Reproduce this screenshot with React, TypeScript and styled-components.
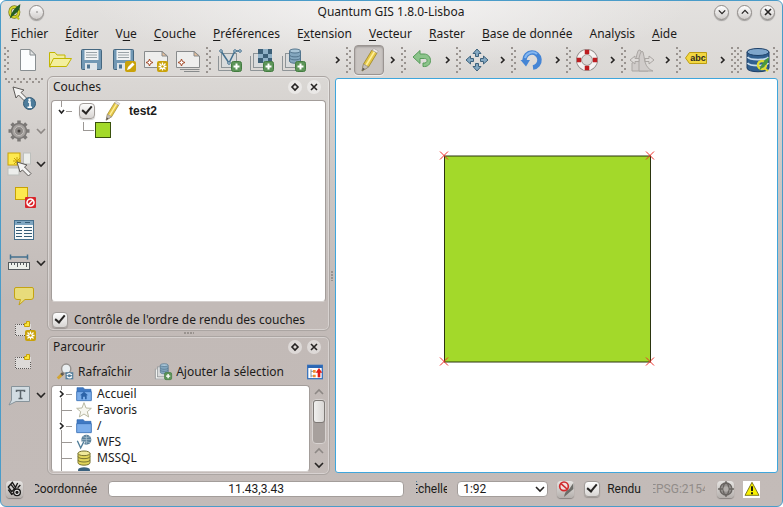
import React from "react";
import styled, { createGlobalStyle, css } from "styled-components";

const GlobalStyle = createGlobalStyle`
  *, *::before, *::after { box-sizing: border-box; }
  body { margin: 0; background: #fff; }
  button, input, select { font: inherit; color: inherit; }
`;

const UI_FONT = `"Noto Sans", "Open Sans", sans-serif`;
const STATUS_FONT = `Roboto, "Liberation Sans", sans-serif`;

/* ---------- window frame ---------- */

const Window = styled.div`
  display: flex;
  flex-direction: column;
  min-height: 100vh;
  padding: 1px 4px 1px 1px;
  border: 1px solid #4a9cc9;
  border-radius: 6px;
  font: 12px/16px ${UI_FONT};
  color: #1c1b1a;
  background: radial-gradient(ellipse 300px 70px at 50% 0, #f4f3f3, transparent) no-repeat,
    linear-gradient(#e3e1df 0, #dad7d4 80px, #ccc7c4 180px, #c2bab7 300px, #c3bbb8);
`;

const TitleBar = styled.header`
  display: grid;
  grid-template-columns: 80px 1fr 80px;
  align-items: center;
  height: 20px;
  padding: 0 3px 0 5px;
`;

const Title = styled.h1`
  margin: 0;
  font: inherit;
  text-align: center;
`;

const TitleSide = styled.div<{ $end?: boolean }>`
  display: flex;
  align-items: center;
  gap: ${(p) => (p.$end ? "8px" : "6px")};
  justify-content: ${(p) => (p.$end ? "flex-end" : "flex-start")};
`;

const RoundButton = styled.button`
  display: grid;
  place-items: center;
  width: 15px;
  height: 15px;
  padding: 0;
  border: 1px solid #8f8b88;
  border-radius: 50%;
  background: linear-gradient(#fff, #cfccca);
  box-shadow: 0 1px 1px rgba(0, 0, 0, 0.3);
`;

const MenuBar = styled.nav`
  display: flex;
  align-items: center;
  height: 22px;
  padding: 2px 0 0 9px;
  gap: 17px;
`;

const MenuButton = styled.button`
  padding: 0;
  border: 0;
  background: none;
  white-space: nowrap;
  u { text-underline-offset: 2px; }
`;

/* ---------- toolbars ---------- */

const ToolBar = styled.div`
  display: flex;
  height: 32px;
  margin: 0 -4px 2px 0;
`;

const ToolGroup = styled.div<{ $wide?: boolean }>`
  display: flex;
  align-items: center;
  flex: 0 0 auto;
  min-width: ${(p) => (p.$wide ? "140px" : "50px")};
`;

const SmallGroup = styled(ToolGroup)`
  width: 55px;
`;

const dots = css`
  background-image: radial-gradient(circle at 1px 1px, #99938f 0.8px, transparent 1.2px),
    radial-gradient(circle at 1px 1px, #99938f 0.8px, transparent 1.2px);
`;

const Handle = styled.div<{ $across?: boolean; $double?: boolean }>`
  ${dots}
  flex: 0 0 auto;
  background-size: 6px 6px;
  background-position: 0 0, 3px 3px;
  ${(p) =>
    p.$across
      ? css`
          width: 38px;
          height: 6px;
          margin: 0 0 -3px 3px;
        `
      : css`
          width: ${p.$double ? "12px" : "6px"};
          height: 26px;
          margin: 0 2px;
        `}
`;

const ToolButton = styled.button<{ $pressed?: boolean; $size?: number }>`
  display: grid;
  place-items: center;
  flex: 0 0 auto;
  width: ${(p) => p.$size ?? 30}px;
  height: 30px;
  padding: 0;
  border: 1px solid ${(p) => (p.$pressed ? "#9a9491" : "transparent")};
  border-radius: 4px;
  background: ${(p) => (p.$pressed ? "#c9c4c1" : "none")};
  box-shadow: ${(p) => (p.$pressed ? "inset 0 1px 2px rgba(0,0,0,.25), 0 1px 0 #f0eeed" : "none")};
`;

const MoreButton = styled.button`
  display: grid;
  place-items: center;
  width: 12px;
  height: 24px;
  margin-left: auto;
  padding: 0;
  border: 0;
  background: none;
`;

const SideBar = styled.div`
  flex: 0 0 45px;
`;

const SideRow = styled.div<{ $menu?: boolean }>`
  display: flex;
  align-items: center;
  height: 33px;
  padding-left: ${(p) => (p.$menu ? "2px" : "7px")};
`;

/* ---------- docks ---------- */

const Body = styled.main`
  display: flex;
  flex: 1;
`;

const DockColumn = styled.div`
  display: flex;
  flex-direction: column;
  flex: 0 0 283px;
  min-width: 0;
  margin: -2px 0 -2px;
`;

const Dock = styled.section<{ $grow?: boolean }>`
  display: flex;
  flex-direction: column;
  flex: ${(p) => (p.$grow ? "1 1 auto" : "0 0 auto")};
  padding: 0 3px 2px;
  border: 1px solid #aba5a2;
  border-radius: 6px;
  box-shadow: inset 0 0 0 1px rgba(255, 255, 255, 0.35);
`;

const DockHead = styled.header`
  display: flex;
  align-items: center;
  gap: 5px;
  height: 21px;
  padding: 0 5px 1px 2px;
  h2 {
    flex: 1;
    margin: 0;
    font: inherit;
  }
`;

const DockButton = styled.button`
  display: grid;
  place-items: center;
  width: 14px;
  height: 14px;
  padding: 0;
  border: 0;
  border-radius: 50%;
  background: rgba(255, 255, 255, 0.45);
`;

const Splitter = styled.div`
  ${dots}
  width: 10px;
  height: 3px;
  margin: 1px auto;
  background-size: 3px 3px;
`;

const VSplitter = styled.div`
  ${dots}
  align-self: center;
  width: 3px;
  height: 10px;
  margin: 0 1px;
  background-size: 3px 3px;
`;

const Sunken = styled.ul<{ $grow?: boolean }>`
  flex: ${(p) => (p.$grow ? "1 1 auto" : "1 1 0")};
  min-width: 0;
  margin: ${(p) => (p.$grow ? "2px 0 0" : "0")};
  padding: 0 0 0 5px;
  list-style: none;
  overflow: hidden;
  border: 1px solid #a39d9a;
  border-bottom-color: #d5d0ce;
  border-radius: 4px;
  background: #fff;
`;

const LayerRow = styled.li<{ $child?: boolean }>`
  display: flex;
  align-items: center;
  height: ${(p) => (p.$child ? "18px" : "20px")};
  padding-left: ${(p) => (p.$child ? "22px" : "0")};
  gap: ${(p) => (p.$child ? "1px" : "7px")};
  font-family: "Liberation Sans", Arial, sans-serif;
  font-weight: 700;
`;

const Swatch = styled.span`
  width: 16px;
  height: 16px;
  border: 1px solid #39500d;
  background: #a3d92a;
`;

const Check = styled.input`
  appearance: none;
  flex: 0 0 auto;
  width: 16px;
  height: 16px;
  margin: 0;
  border: 1px solid #a29d9a;
  border-radius: 4px;
  background: linear-gradient(#fdfdfd, #d8d5d3);
  box-shadow: 0 1px 1px rgba(0, 0, 0, 0.2);
  &:checked::before {
    content: "";
    display: block;
    width: 6px;
    height: 10px;
    margin: 0 auto;
    border: solid #262423;
    border-width: 0 2px 2px 0;
    transform: rotate(40deg);
  }
`;

const CheckLabel = styled.label`
  display: flex;
  align-items: center;
  gap: 6px;
  height: 26px;
  padding: 9px 0 0 1px;
`;

const BrowserTools = styled.div`
  display: flex;
  align-items: center;
  justify-content: space-between;
  height: 27px;
  padding: 0 3px 0 6px;
`;

const TextButton = styled.button`
  display: flex;
  align-items: center;
  gap: 4px;
  padding: 0;
  border: 0;
  background: none;
  white-space: nowrap;
`;

const BrowserArea = styled.div`
  display: flex;
  gap: 2px;
  height: 87px;
`;

const BrowserRow = styled.li`
  display: flex;
  align-items: center;
  height: 16px;
  gap: 4px;
  svg + svg { margin-right: 1px; }
`;

const Scroll = styled.div`
  display: flex;
  flex-direction: column;
  width: 14px;
`;

const ScrollButton = styled.button`
  display: grid;
  place-items: center;
  height: 14px;
  padding: 0;
  border: 0;
  background: none;
`;

const Track = styled.div`
  flex: 1;
  border: 1px solid #d7d2d0;
  border-radius: 4px;
  background: #a7a09d;
`;

const Thumb = styled.div`
  height: 23px;
  border: 1px solid #7e7976;
  border-radius: 3px;
  background: linear-gradient(90deg, #f0efee, #dad7d5);
`;

const MapCanvas = styled.div`
  display: flex;
  flex: 1 1 0;
  min-width: 0;
  border: 1px solid #3fa6dc;
  border-radius: 3px;
  background: #fff;
  svg {
    flex: 1;
    min-width: 0;
  }
`;

/* ---------- status bar ---------- */

const StatusBar = styled.footer`
  display: flex;
  align-items: center;
  height: 32px;
  padding: 0 18px 0 4px;
  font-family: ${STATUS_FONT};
`;

const Clipped = styled.label<{ $width: number; $align: "center" | "flex-end"; $dim?: boolean }>`
  display: flex;
  flex: 0 0 ${(p) => p.$width}px;
  justify-content: ${(p) => p.$align};
  margin-left: 12px;
  overflow: hidden;
  white-space: nowrap;
  color: ${(p) => (p.$dim ? "#918c89" : "inherit")};
`;

const Coordinates = styled.input`
  flex: 1;
  min-width: 80px;
  height: 16px;
  margin-left: 11px;
  padding: 0;
  border: 1px solid #a39d9a;
  border-radius: 4px;
  background: #fff;
  text-align: center;
`;

const SelectBox = styled.div`
  display: grid;
  flex: 0 0 91px;
  margin: 0 9px 0 10px;
  align-items: center;
  > * { grid-area: 1 / 1; }
  svg { justify-self: end; margin-right: 3px; pointer-events: none; }
`;

const ScaleSelect = styled.select`
  appearance: none;
  width: 100%;
  height: 16px;
  padding: 0 5px;
  border: 1px solid #a39d9a;
  border-radius: 4px;
  background: #fff;
  line-height: 14px;
`;

const RenderLabel = styled.label`
  display: flex;
  align-items: center;
  gap: 7px;
  margin-left: 10px;
`;

const StatusButton = styled.button<{ $gap?: number; $plain?: boolean }>`
  display: grid;
  place-items: center;
  flex: 0 0 17px;
  height: 17px;
  margin-left: ${(p) => p.$gap ?? 0}px;
  padding: 0;
  border: 0;
  border-radius: ${(p) => (p.$plain ? "0" : "4px")};
  background: ${(p) => (p.$plain ? "#fff" : "linear-gradient(#e6e4e2, #b5b0ad)")};
  box-shadow: ${(p) => (p.$plain ? "none" : "0 1px 1px rgba(0,0,0,.3)")};
`;

/* ---------- icons ---------- */

const art: Record<string, React.ReactNode> = {
  blank: (
    <g>
      <path d="M4.500 1.500H14L19.500 7V22.500H4.500Z" fill="#fbfdfe" stroke="#888e91" />
      <path d="M14 1.500V7H19.500Z" fill="#e4e5e5" stroke="#888e91" />
    </g>
  ),
  open: (
    <g stroke="#c2b600" strokeLinejoin="round">
      <path d="M1.500 19V4.500H7L9 7H17V10.500H6L3 19Z" fill="#f1eda0" />
      <path d="M5.500 10.500H23.500L18.500 18.500H1.500Z" fill="#f3ef9f" />
    </g>
  ),
  save: (
    <g>
      <rect x="1.500" y="1.500" width="20" height="20" rx="1" fill="#7298b4" stroke="#456780" />
      <rect x="4.500" y="2" width="14" height="10" fill="#f0f2f3" />
      <path d="M6 4.500H17M6 7H17M6 9.500H17" stroke="#9aa3a8" />
      <rect x="5" y="15" width="12" height="7" fill="#dfe5e9" />
      <rect x="7" y="16.500" width="3" height="4" fill="#4d7390" />
    </g>
  ),
  penBadge: (
    <g>
      <rect x="13" y="13" width="11" height="11" rx="2" fill="#c9a20a" />
      <path d="M15 22L16 19L20.500 14.500L22.500 16.500L18 21Z" fill="#fff" />
    </g>
  ),
  starBadge: (
    <g>
      <rect x="13" y="13" width="11" height="11" rx="2" fill="#c9a20a" />
      <path d="M18.500 14.500V22.500M14.500 18.500H22.500M15.500 15.500L21.500 21.500M21.500 15.500L15.500 21.500" stroke="#fff" strokeWidth="1.300" />
      <circle cx="18.500" cy="18.500" r="1.200" fill="#c9a20a" />
    </g>
  ),
  plusBadge: (
    <g>
      <rect x="13.500" y="13.500" width="10" height="10" rx="2" fill="#5d9559" stroke="#437c40" />
      <path d="M18.500 15.500V21.500M15.500 18.500H21.500" stroke="#fff" strokeWidth="2" />
    </g>
  ),
  page: (
    <g>
      <path d="M.5 3.500H18L23.500 8V19.500H.5Z" fill="#eeeeed" stroke="#888b8c" />
      <path d="M18 3.500V8H23Z" fill="#eac19a" stroke="#888b8c" />
      <path d="M5.500 11L6.500 13.500L9 14.500L6.500 15.500L5.500 18L4.500 15.500L2 14.500L4.500 13.500Z" fill="#fff" stroke="#a34a28" />
    </g>
  ),
  pages: <path d="M4 21.500H23.500M8 23.500H23.500" stroke="#888b8c" />,
  sheet: (
    <g>
      <path d="M.5 8V22.500H14" fill="none" stroke="#8e9497" />
      <rect x="3.500" y="5.500" width="15" height="14" fill="#d9dbdc" stroke="#8e9497" />
    </g>
  ),
  vector: (
    <g fill="none" stroke="#44708e">
      <path d="M3 3L11 15L17 3H22" strokeWidth="1.500" />
      <g fill="#dbe7ef">
        <circle cx="3" cy="3" r="1.300" />
        <circle cx="11" cy="15" r="1.300" />
        <circle cx="17" cy="3" r="1.300" />
        <circle cx="22" cy="3" r="1.300" />
      </g>
    </g>
  ),
  raster: (
    <g>
      <rect x="8" y="1" width="14" height="14" fill="#8fb0c6" />
      <path d="M8 1H13V6H8ZM18 1H22V6H18ZM13 6H18V10H13ZM8 10H13V15H8ZM18 10H22V15H18Z" fill="#3d6078" />
    </g>
  ),
  barrel: (
    <g stroke="#53758d">
      <path d="M7.500 3V13C7.500 16 18.500 16 18.500 13V3" fill="#83a6be" />
      <ellipse cx="13" cy="3" rx="5.500" ry="2" fill="#a9c5d7" />
      <path d="M7.500 7C8 9.500 18 9.500 18.500 7M7.500 10C8 12.500 18 12.500 18.500 10" fill="none" />
    </g>
  ),
  pencil: (
    <g strokeLinejoin="round">
      <path d="M5 23L6.500 16L15 2L20 5L11.500 19Z" fill="#e4c647" stroke="#9b8425" strokeWidth=".8" />
      <path d="M9 17.500L17.500 3.500" stroke="#fff09b" strokeWidth="1.600" />
      <path d="M15 2L17 .6L21.300 3L20 5Z" fill="#eeeae8" stroke="#a19b98" strokeWidth=".6" />
      <path d="M5 23L6.500 16L11.500 19Z" fill="#c5bfbb" stroke="#88827e" strokeWidth=".6" />
      <path d="M5 23L5.800 19.800L8 21Z" fill="#56524f" />
    </g>
  ),
  undo: (
    <path d="M1 9L8 2.500V6H12C16 6 18.500 9 18.500 12.500C18.500 16.500 15.500 19 11 18.500V15C14 15.500 15 14 15 12.500C15 11 14 10.500 12.500 10.500H8V15.500Z" fill="#8cc48b" stroke="#579b5a" strokeLinejoin="round" />
  ),
  move: (
    <g fill="#84a8c2" stroke="#3e627c" strokeLinejoin="round">
      <path d="M10 1L14 5.500H11.500V8.500H8.500V5.500H6Z" />
      <path d="M10 23L6 18.500H8.500V15.500H11.500V18.500H14Z" />
      <path d="M-1 12L3.500 8V10.500H6.500V13.500H3.500V16Z" />
      <path d="M21 12L16.500 16V13.500H13.500V10.500H16.500V8Z" />
    </g>
  ),
  refresh: (
    <g>
      <path d="M2.500 12A7.500 7.500 0 1 1 11 19.500" fill="none" stroke="#4585d5" strokeWidth="4.500" />
      <path d="M3 10A7.500 7.500 0 0 1 15 6" fill="none" stroke="#85b7f0" strokeWidth="2" />
      <path d="M-1.500 12H8L4 18.500Z" fill="#4585d5" />
    </g>
  ),
  lifebuoy: (
    <g fill="none">
      <circle cx="10" cy="12" r="8" stroke="#8f8a88" strokeWidth="6" />
      <circle cx="10" cy="12" r="8" stroke="#f5f3f2" strokeWidth="4.500" />
      <path d="M10 1.800V6.200M10 17.800V22.200M-.2 12H4.200M15.800 12H20.200" stroke="#bd1d20" strokeWidth="4.500" />
    </g>
  ),
  curves: (
    <g fill="#d0ccca" stroke="#aaa6a3">
      <path d="M0 23V15Q4 14 5 6Q6 1 8 2Q10 3 10 12Q11 20 16 23Z" />
      <path d="M7 23V10Q9 1 11 4Q12 8 13 14Q15 21 21 23Z" />
      <path d="M-2 12L3 8V10.500H7V13.500H3V16ZM22 12L17 8V10.500H13V13.500H17V16Z" fill="#dedbd9" />
    </g>
  ),
  postgis: (
    <g>
      <path d="M1 4V20C1 25 23 25 23 20V4Z" fill="#315f8f" stroke="#1c3f67" />
      <ellipse cx="12" cy="4" rx="11" ry="3.500" fill="#7fa6cb" stroke="#1c3f67" />
      <path d="M1.500 9C4 12.500 20 12.500 22.500 9M1.500 15C4 18.500 20 18.500 22.500 15" fill="none" stroke="#c8dced" strokeWidth="1.800" />
      <circle cx="16" cy="17" r="4" fill="none" stroke="#e1dc32" strokeWidth="2.500" />
      <path d="M13 23Q16 13 23 9Q23 16 17 19Z" fill="#4b983d" />
      <path d="M18 20L22 23" stroke="#e1dc32" strokeWidth="2" />
    </g>
  ),
  arrowTop: (
    <path d="M1 1L12 4L9 6.500L15.500 13L13 15.500L6.500 9L4 12Z" fill="#f4f4f3" stroke="#5c5956" />
  ),
  info: (
    <g>
      <circle cx="17.500" cy="17.500" r="6" fill="#4d7c9b" stroke="#355b75" />
      <path d="M16 16H18V21M15.500 21.300H20" fill="none" stroke="#fff" strokeWidth="1.600" />
      <circle cx="17.500" cy="13.700" r="1.200" fill="#fff" />
    </g>
  ),
  gear: (
    <g fill="none" stroke="#7b7876">
      <path d="M12 1.500V22.500M1.500 12H22.500M4.600 4.600L19.400 19.400M4.600 19.400L19.400 4.600" strokeWidth="3.500" />
      <circle cx="12" cy="12" r="7.500" fill="#a5a19e" strokeWidth="1.500" />
      <circle cx="12" cy="12" r="4.500" fill="#8d8986" stroke="#c5c1be" />
      <circle cx="12" cy="12" r="1.500" fill="#45413f" stroke="none" />
    </g>
  ),
  select: (
    <g>
      <rect x="1" y="1" width="12" height="12" fill="#fde94f" stroke="#c8a106" />
      <rect x="16.500" y="1" width="7" height="11" fill="#eceeec" stroke="#bdc0bd" />
      <rect x="1" y="16" width="11" height="7" fill="#eceeec" stroke="#bdc0bd" />
      <path d="M10 5V13M6 9H14M7 6L13 12M13 6L7 12" stroke="#c8a106" />
      <path d="M10 10L20 13L17.500 15L24 21.500L21.500 24L15.500 18L13 20Z" fill="#f4f4f3" stroke="#5c5956" />
    </g>
  ),
  deselect: (
    <g>
      <rect x="3.500" y="2.500" width="12" height="12" fill="#fde94f" stroke="#c8a106" />
      <rect x="13" y="12" width="11" height="11" rx="1" fill="#d9252b" />
      <circle cx="18.500" cy="17.500" r="3.500" fill="none" stroke="#fff" strokeWidth="1.500" />
      <path d="M16 20L21 15" stroke="#fff" strokeWidth="1.500" />
    </g>
  ),
  table: (
    <g>
      <rect x="2.500" y="2.500" width="19" height="19" fill="#f8fafa" stroke="#456f8c" />
      <path d="M3 5H21" stroke="#7ea5c0" strokeWidth="4" />
      <path d="M4 9.500H10M4 12.500H10M4 15.500H10M4 18.500H10M12 9.500H20M12 12.500H20M12 15.500H20M12 18.500H20M5 4.500H9M13 4.500H18" stroke="#355c76" />
    </g>
  ),
  ruler: (
    <g>
      <path d="M3 6H21M3.500 3.500V8.500M20.500 3.500V8.500" stroke="#45718e" strokeWidth="1.500" />
      <rect x="1.500" y="11.500" width="21" height="7" fill="#edf0eb" stroke="#565b5e" />
      <path d="M4.500 12V14M7.500 12V14M10.500 12V16M13.500 12V14M16.500 12V14M19.500 12V16" stroke="#565b5e" />
    </g>
  ),
  bubble: (
    <path d="M4 3.500H20Q21.500 3.500 21.500 5V13Q21.500 15.500 19 15.500H13L7 21L8.500 15.500H5Q2.500 15.500 2.500 13V5Q2.500 3.500 4 3.500Z" fill="#e8dc7b" stroke="#c4a313" />
  ),
  shape: (
    <g>
      <rect x="3" y="7" width="16" height="12" fill="#dddad8" />
      <path d="M12 7.500H3.500V18.500H18.500V11" fill="none" stroke="#5b5755" strokeDasharray="1 1" />
      <path d="M14.500 4.500H17.500V9.500H12.500V6.500H14.500Z" fill="#f9e63c" stroke="#c8a106" />
    </g>
  ),
  annotation: (
    <g>
      <path d="M4.500 3.500H22.500V18.500H9L2 22L4.500 17Z" fill="#d2dce2" stroke="#87939a" />
      <path d="M9.500 9V7.500H17.500V9M13.500 7.500V15M11.500 15.500H15.500" fill="none" stroke="#5b656b" strokeWidth="1.500" />
    </g>
  ),
  magnifier: (
    <g>
      <path d="M1 22L8 15" stroke="#d2a535" strokeWidth="4" />
      <path d="M6 17L9 14" stroke="#5f5b58" strokeWidth="4" />
      <circle cx="13" cy="8" r="6.500" fill="#e9eef0" stroke="#96918e" strokeWidth="2" />
      <rect x="12" y="13" width="11" height="10" fill="#557f9c" />
      <path d="M14 17Q17 13 21 17M21 19Q18 23 14 19" fill="none" stroke="#fff" strokeWidth="2" />
    </g>
  ),
  sheetFill: <path d="M1 9H4V20H14V23H1Z" fill="#f1f2f0" />,
  tree: (
    <g>
      <rect x="1" y="2" width="22" height="20" fill="#fff" stroke="#3d77be" strokeWidth="2" />
      <path d="M1 4H23" stroke="#2b66b4" strokeWidth="4" />
      <path d="M6 8V20M6 11H12M6 18H12" fill="none" stroke="#8693a1" strokeWidth="1.500" />
      <path d="M9 9H13V13H9ZM9 16H13V20H9Z" fill="#ef8b2d" />
      <path d="M18 20V11" stroke="#e21b16" strokeWidth="4" />
      <path d="M13 13L18 6L23 13Z" fill="#e21b16" />
    </g>
  ),
  folder: (
    <g stroke="#2e66ad">
      <path d="M1.500 21V2.500H11L13 5H22.500V21Z" fill="#3f79c4" />
      <path d="M1 8.500H23V22H1Z" fill="#7badea" />
    </g>
  ),
  house: <path d="M6 14L12 8.500L18 14H16V20H13.500V16H10.500V20H8V14Z" fill="#2c62a7" />,
  star: (
    <path d="M12 1L15 9L23 9.500L17 14.500L19 22.500L12 18L5 22.500L7 14.500L1 9.500L9 9Z" fill="#f7f7f0" stroke="#b9b9a3" strokeWidth="1.500" />
  ),
  wfs: (
    <g fill="none">
      <circle cx="15.500" cy="8.500" r="7.500" fill="#587f9a" />
      <path d="M8 8.500H23M15.500 1V16M10 4Q15.500 7 21 4M10 13Q15.500 10 21 13" stroke="#b8cbd7" />
      <path d="M2 10L7 21L12 11" stroke="#fff" strokeWidth="4" />
      <path d="M2 10L7 21L12 11" stroke="#4e7c98" strokeWidth="2" />
    </g>
  ),
  yellowDb: (
    <g stroke="#77722f" strokeWidth="1.500">
      <path d="M3 5V19C3 24 21 24 21 19V5" fill="#e1d45a" />
      <ellipse cx="12" cy="5" rx="9" ry="3.500" fill="#f0e99a" />
      <path d="M3 10C4 14 20 14 21 10M3 15C4 19 20 19 21 15" fill="none" />
    </g>
  ),
  blueDb: (
    <g>
      <path d="M3 6V24H21V6" fill="#6b92ae" />
      <ellipse cx="12" cy="6" rx="9" ry="4" fill="#3b627f" />
    </g>
  ),
  noRender: (
    <g fill="none">
      <path d="M9 24Q10 15 17 12L23 3V12L14 20Z" fill="#6d6d69" />
      <circle cx="9" cy="8" r="6.500" fill="#f1dddd" stroke="#d02a2d" strokeWidth="2.500" />
      <path d="M4.500 4L13.500 12" stroke="#d02a2d" strokeWidth="2.500" />
    </g>
  ),
  crs: (
    <g fill="none" stroke="#696562" strokeWidth="2">
      <circle cx="12" cy="12" r="9" fill="#969290" />
      <ellipse cx="12" cy="12" rx="4" ry="9" />
      <path d="M3 12H21M12 0V5M12 19V24M0 12H4M20 12H24" />
      <circle cx="12" cy="12" r="4" fill="#b2aeab" stroke="none" />
    </g>
  ),
  warning: (
    <g>
      <path d="M12 2L22.500 21.500H1.500Z" fill="#f8f000" stroke="#807b22" strokeWidth="1.500" />
      <path d="M12 8V15M12 17V20" stroke="#111" strokeWidth="2.800" />
    </g>
  ),
  mouse: (
    <g fill="none" stroke="#191817" strokeWidth="2">
      <path d="M2 9L8 2L13 10L7 16ZM5 4L12 13M2 13L7 20L12 17M16 3L13 9M20 6L16 10" />
      <circle cx="15" cy="17" r="5" fill="#eee" />
      <circle cx="15" cy="17" r="1.500" fill="#191817" />
    </g>
  ),
  logo: (
    <g fill="none">
      <ellipse cx="11" cy="12" rx="6.500" ry="7.500" stroke="#77781a" strokeWidth="5" />
      <ellipse cx="11" cy="12" rx="6.500" ry="7.500" stroke="#d6d72c" strokeWidth="3" />
      <path d="M14 18L18 23" stroke="#c5c61f" strokeWidth="3" />
      <path d="M4 22Q7 8 20 0Q20 10 12 15Z" fill="#245d24" />
    </g>
  ),
  label: (
    <g>
      <path d="M-1.500 10L2.500 4.500H19.500V15.500H2.500Z" fill="#f2d741" stroke="#bd9d12" strokeLinejoin="round" />
      <text x="11" y="13" textAnchor="middle" fontFamily="Liberation Sans, Arial, sans-serif" fontSize="9" fontWeight="700" fill="#2c2a20">
        abc
      </text>
    </g>
  ),
};

const IconSvg = styled.svg`
  display: block;
  flex: 0 0 auto;
  overflow: visible;
`;

const Icon = ({ parts, size = 24 }: { parts: string; size?: number }) => (
  <IconSvg width={size} height={size} viewBox="0 0 24 24" fill="none" aria-hidden="true">
    {parts.split(" ").map((p) => (
      <React.Fragment key={p}>{art[p]}</React.Fragment>
    ))}
  </IconSvg>
);

const marks = {
  right: "M3 2L6 5L3 8",
  down: "M1 3L5 7L9 3",
  up: "M1 7L5 3L9 7",
  close: "M2 2L8 8M8 2L2 8",
  diamond: "M5 2L8 5L5 8L2 5Z",
  dot: "M4.500 5H5.500",
};

const Mark = ({ kind, size = 10, dim }: { kind: keyof typeof marks; size?: number; dim?: boolean }) => (
  <svg width={size} height={size} viewBox="0 0 10 10" aria-hidden="true">
    <path d={marks[kind]} fill="none" stroke={dim ? "#8d8885" : "#262423"} strokeWidth={kind === "dot" ? 1 : 1.6} />
  </svg>
);

const Branch = ({ expander, tall, last }: { expander?: "right" | "down"; tall?: boolean; last?: boolean }) => {
  const h = tall ? 20 : 16;
  const mid = h / 2;
  return (
    <svg width="15" height={h} viewBox={`0 0 15 ${h}`} fill="none" stroke="#9c9895" aria-hidden="true">
      {expander ? (
        <>
          <path d={`M4.500 0V${mid - 4}M9 ${mid + 0.5}H15${last ? "" : `M4.500 ${mid + 4}V${h}`}`} />
          <path
            d={expander === "right" ? `M3 ${mid - 3}L6 ${mid}L3 ${mid + 3}` : `M2 ${mid - 1}L4.500 ${mid + 2}L7 ${mid - 1}`}
            stroke="#222"
            strokeWidth="1.600"
          />
        </>
      ) : (
        <path d={`M4.500 0V${last ? mid : h}M4 ${mid + 0.5}H15`} />
      )}
    </svg>
  );
};

/* ---------- data ---------- */

const menus: [string, string, string][] = [
  ["", "F", "ichier"],
  ["", "É", "diter"],
  ["V", "u", "e"],
  ["", "C", "ouche"],
  ["", "P", "références"],
  ["E", "x", "tension"],
  ["", "V", "ecteur"],
  ["", "R", "aster"],
  ["", "B", "ase de donnée"],
  ["Analysis", "", ""],
  ["", "A", "ide"],
];

const fileTools = [
  ["Nouveau", "blank"],
  ["Ouvrir", "open"],
  ["Sauvegarder", "save"],
  ["Sauvegarder sous", "save penBadge"],
  ["Nouveau composeur", "page starBadge"],
  ["Gestionnaire de composeurs", "page pages"],
];

const layerTools = [
  ["Ajouter une couche vecteur", "sheet vector plusBadge"],
  ["Ajouter une couche raster", "sheet raster plusBadge"],
  ["Ajouter une couche PostGIS", "sheet barrel plusBadge"],
];

const smallGroups = [
  ["Mode édition", "pencil"],
  ["Annuler", "undo"],
  ["Déplacer", "move"],
  ["Rafraîchir", "refresh"],
  ["Aide", "lifebuoy"],
  ["Histogramme", "curves"],
  ["Étiquetage", "label"],
];

const sideTools: { name: string; icon: string; menu?: boolean; dim?: boolean }[] = [
  { name: "Identifier", icon: "arrowTop info" },
  { name: "Actions", icon: "gear", menu: true, dim: true },
  { name: "Sélectionner", icon: "select", menu: true },
  { name: "Désélectionner", icon: "deselect" },
  { name: "Table d'attributs", icon: "table" },
  { name: "Mesurer", icon: "ruler", menu: true },
  { name: "Infobulles", icon: "bubble" },
  { name: "Nouveau signet", icon: "shape starBadge" },
  { name: "Signets", icon: "shape" },
  { name: "Annotation", icon: "annotation", menu: true },
];

const places: { name: string; icon: string; open?: boolean }[] = [
  { name: "Accueil", icon: "folder house", open: true },
  { name: "Favoris", icon: "star" },
  { name: "/", icon: "folder", open: true },
  { name: "WFS", icon: "wfs" },
  { name: "MSSQL", icon: "yellowDb" },
  { name: "", icon: "blueDb" },
];

const DockTitle = ({ children }: { children: string }) => (
  <DockHead>
    <h2>{children}</h2>
    <DockButton aria-label="Détacher">
      <Mark kind="diamond" />
    </DockButton>
    <DockButton aria-label="Fermer">
      <Mark kind="close" />
    </DockButton>
  </DockHead>
);

const corners = [
  [108, 76],
  [314, 76],
  [108, 282],
  [314, 282],
];

export default function App() {
  return (
    <>
      <GlobalStyle />
      <Window>
        <TitleBar>
          <TitleSide>
            <Icon parts="logo" size={16} />
            <RoundButton aria-label="Épingler">
              <Mark kind="dot" />
            </RoundButton>
          </TitleSide>
          <Title>Quantum GIS 1.8.0-Lisboa</Title>
          <TitleSide $end>
            <RoundButton aria-label="Réduire">
              <Mark kind="down" size={8} />
            </RoundButton>
            <RoundButton aria-label="Agrandir">
              <Mark kind="up" size={8} />
            </RoundButton>
            <RoundButton aria-label="Fermer">
              <Mark kind="close" />
            </RoundButton>
          </TitleSide>
        </TitleBar>

        <MenuBar>
          {menus.map(([before, key, after]) => (
            <MenuButton key={before + key + after}>
              {before}
              {key && <u>{key}</u>}
              {after}
            </MenuButton>
          ))}
        </MenuBar>

        <ToolBar>
          <ToolGroup>
            <Handle />
            {fileTools.map(([name, icon]) => (
              <ToolButton key={name} aria-label={name} $size={32}>
                <Icon parts={icon} />
              </ToolButton>
            ))}
          </ToolGroup>
          <ToolGroup $wide>
            <Handle />
            {layerTools.map(([name, icon]) => (
              <ToolButton key={name} aria-label={name} $size={32}>
                <Icon parts={icon} />
              </ToolButton>
            ))}
            <MoreButton aria-label="Plus">
              <Mark kind="right" />
            </MoreButton>
          </ToolGroup>
          {smallGroups.map(([name, icon]) => (
            <SmallGroup key={name}>
              <Handle />
              <ToolButton aria-label={name} $pressed={icon === "pencil"}>
                <Icon parts={icon} />
              </ToolButton>
              <MoreButton aria-label="Plus">
                <Mark kind="right" />
              </MoreButton>
            </SmallGroup>
          ))}
          <ToolGroup>
            <Handle $double />
            <ToolButton aria-label="PostGIS" $size={26}>
              <Icon parts="postgis" />
            </ToolButton>
            <Handle />
          </ToolGroup>
        </ToolBar>

        <Body>
          <SideBar>
            <Handle $across />
            {sideTools.map((t) => (
              <SideRow key={t.name} $menu={t.menu}>
                <ToolButton aria-label={t.name}>
                  <Icon parts={t.icon} />
                </ToolButton>
                {t.menu && (
                  <MoreButton aria-label={`${t.name} : options`}>
                    <Mark kind="down" dim={t.dim} />
                  </MoreButton>
                )}
              </SideRow>
            ))}
          </SideBar>

          <DockColumn>
            <Dock $grow>
              <DockTitle>Couches</DockTitle>
              <Sunken $grow>
                <LayerRow>
                  <Branch expander="down" tall last />
                  <Check type="checkbox" id="layer" defaultChecked />
                  <Icon parts="pencil" size={20} />
                  <label htmlFor="layer">test2</label>
                </LayerRow>
                <LayerRow $child>
                  <Branch last />
                  <Swatch />
                </LayerRow>
              </Sunken>
              <CheckLabel>
                <Check type="checkbox" defaultChecked />
                Contrôle de l'ordre de rendu des couches
              </CheckLabel>
            </Dock>
            <Splitter />
            <Dock>
              <DockTitle>Parcourir</DockTitle>
              <BrowserTools>
                <TextButton>
                  <Icon parts="magnifier" size={17} />
                  Rafraîchir
                </TextButton>
                <TextButton>
                  <Icon parts="sheetFill sheet barrel plusBadge" size={17} />
                  Ajouter la sélection
                </TextButton>
                <TextButton aria-label="Replier">
                  <Icon parts="tree" size={16} />
                </TextButton>
              </BrowserTools>
              <BrowserArea>
                <Sunken>
                  {places.map((p) => (
                    <BrowserRow key={p.icon}>
                      <Branch expander={p.open ? "right" : undefined} />
                      <Icon parts={p.icon} size={16} />
                      {p.name}
                    </BrowserRow>
                  ))}
                </Sunken>
                <Scroll>
                  <ScrollButton aria-label="Monter">
                    <Mark kind="up" dim />
                  </ScrollButton>
                  <Track>
                    <Thumb />
                  </Track>
                  <ScrollButton aria-label="Page précédente">
                    <Mark kind="up" dim />
                  </ScrollButton>
                  <ScrollButton aria-label="Descendre">
                    <Mark kind="down" />
                  </ScrollButton>
                </Scroll>
              </BrowserArea>
            </Dock>
          </DockColumn>

          <VSplitter />

          <MapCanvas>
            <svg viewBox="0 0 441 392" role="img" aria-label="test2">
              <rect x="108.500" y="76.500" width="206" height="206" fill="#a3d92a" stroke="#2b350f" />
              {corners.map(([x, y]) => (
                <path key={`${x}-${y}`} d={`M${x - 4} ${y - 4}l8 8m0 -8l-8 8`} stroke="#f0302c" />
              ))}
            </svg>
          </MapCanvas>
        </Body>

        <StatusBar>
          <StatusButton aria-label="Position de la souris">
            <Icon parts="mouse" size={16} />
          </StatusButton>
          <Clipped htmlFor="coords" $width={62} $align="flex-end">
            Coordonnée
          </Clipped>
          <Coordinates id="coords" defaultValue="11.43,3.43" />
          <Clipped htmlFor="scale" $width={31} $align="center">
            Échelle:
          </Clipped>
          <SelectBox>
            <ScaleSelect id="scale" defaultValue="1:92">
              <option>1:92</option>
            </ScaleSelect>
            <Mark kind="down" />
          </SelectBox>
          <StatusButton aria-label="Arrêter le rendu">
            <Icon parts="noRender" size={16} />
          </StatusButton>
          <RenderLabel>
            <Check type="checkbox" defaultChecked />
            Rendu
          </RenderLabel>
          <Clipped as="span" $width={52} $align="center" $dim>
            EPSG:2154
          </Clipped>
          <StatusButton aria-label="Projection" $gap={12}>
            <Icon parts="crs" size={16} />
          </StatusButton>
          <StatusButton aria-label="Avertissements" $gap={9} $plain>
            <Icon parts="warning" size={16} />
          </StatusButton>
        </StatusBar>
      </Window>
    </>
  );
}
